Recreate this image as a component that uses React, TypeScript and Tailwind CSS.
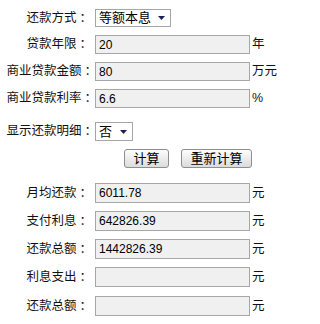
import React from 'react';

const font = 'font-["Liberation_Sans","Noto_Sans_CJK_SC",sans-serif]';

const Label = ({ text, wide }: { text: string; wide?: boolean }) => (
  <div
    className={`shrink-0 whitespace-nowrap text-right text-[12.5px] leading-none text-[#111] ${
      wide ? 'w-[98px] -mr-[3px] pr-[1px]' : 'w-[95px] pr-[3px]'
    }`}
  >
    {text}
    <span className="ml-[3px]">：</span>
  </div>
);

const Field = ({ value, unit }: { value: string; unit?: string }) => (
  <>
    <div className="flex h-full w-[155px] shrink-0 items-center border border-[#a7a7a7] bg-[#f0f0f0] pl-[3px] text-[12px] text-black">
      {value}
    </div>
    {unit && <span className="ml-[2px] text-[12.5px] text-[#111]">{unit}</span>}
  </>
);

const Select = ({ value, width }: { value: string; width: string }) => (
  <div className={`flex h-full items-center justify-between border border-[#a5a5a5] bg-white pl-[3px] pr-[5px] text-[13px] text-black ${width}`}>
    <span>{value}</span>
    <svg width="7" height="4" viewBox="0 0 7 4">
      <path d="M0 0H7L3.5 4Z" fill="#1c2150" />
    </svg>
  </div>
);

const Button = ({ text, width }: { text: string; width: string }) => (
  <button
    className={`h-full rounded-[3px] border border-[#8e8e8e] bg-gradient-to-b from-[#fdfdfd] to-[#dcdcdc] text-[13px] leading-none text-black ${width}`}
  >
    {text}
  </button>
);

export default function App() {
  return (
    <div className={`${font} h-[324px] w-[279px] bg-white pt-[9px]`}>
      <div className="flex h-[18px] items-center">
        <Label text="还款方式" />
        <Select value="等额本息" width="w-[76px]" />
      </div>
      <div className="mt-[8px] flex h-[19px] items-center">
        <Label text="贷款年限" />
        <Field value="20" unit="年" />
      </div>
      <div className="mt-[8px] flex h-[19px] items-center">
        <Label text="商业贷款金额" wide />
        <Field value="80" unit="万元" />
      </div>
      <div className="mt-[8px] flex h-[19px] items-center">
        <Label text="商业贷款利率" wide />
        <Field value="6.6" unit="%" />
      </div>
      <div className="mt-[14px] flex h-[19px] items-center">
        <Label text="显示还款明细" wide />
        <Select value="否" width="w-[38px]" />
      </div>
      <div className="mt-[8px] flex h-[19px] items-center gap-[12px] pl-[124px]">
        <Button text="计算" width="w-[45px]" />
        <Button text="重新计算" width="w-[71px]" />
      </div>
      <div className="mt-[15px] flex h-[20px] items-center">
        <Label text="月均还款" />
        <Field value="6011.78" unit="元" />
      </div>
      <div className="mt-[8px] flex h-[20px] items-center">
        <Label text="支付利息" />
        <Field value="642826.39" unit="元" />
      </div>
      <div className="mt-[8px] flex h-[20px] items-center">
        <Label text="还款总额" />
        <Field value="1442826.39" unit="元" />
      </div>
      <div className="mt-[8px] flex h-[20px] items-center">
        <Label text="利息支出" />
        <Field value="" unit="元" />
      </div>
      <div className="mt-[9px] flex h-[20px] items-center">
        <Label text="还款总额" />
        <Field value="" unit="元" />
      </div>
    </div>
  );
}
